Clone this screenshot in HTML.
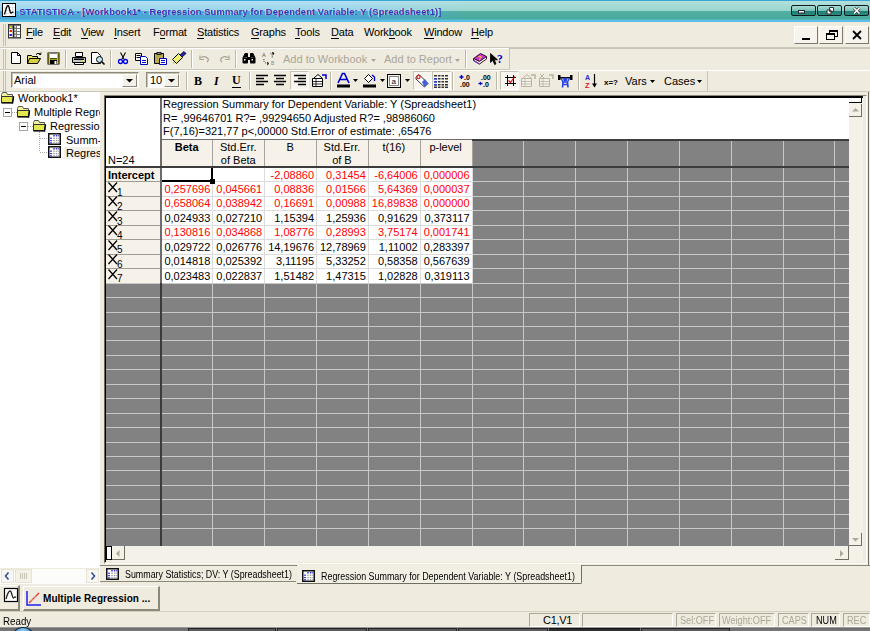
<!DOCTYPE html>
<html><head><meta charset="utf-8">
<style>
*{box-sizing:border-box}
html,body{margin:0;padding:0;width:870px;height:631px;overflow:hidden;background:#EFEBDF;font-family:"Liberation Sans",sans-serif;font-size:11px;color:#000}
.a{position:absolute}
svg{position:absolute;overflow:visible}
.t{position:absolute;white-space:pre;line-height:1}
.menu{position:absolute;top:27px;font-size:11px;white-space:pre;line-height:1;letter-spacing:-0.2px}
.menu u{text-decoration:none;border-bottom:1px solid #000}
.tbtn{position:absolute;top:5px;width:25px;height:11px;border:1.5px solid #0e1a1c;border-radius:2px;background:linear-gradient(180deg,#a8dcd4 0%,#7cc4bc 50%,#1f7e72 52%,#2a8a80 100%)}
.mdib{position:absolute;top:26px;width:24px;height:18px;background:#F6F4EC;border-right:1px solid #7d7a6c;border-bottom:1px solid #7d7a6c;border-top:1px solid #fff;border-left:1px solid #fff}
.vsep{position:absolute;width:2px;height:18px;border-left:1px solid #bdb9aa;border-right:1px solid #fff}
.grip{position:absolute;width:3px;border-left:1px solid #c4c0b0;border-right:1px solid #c4c0b0}

.dis{color:#aaa697}
.press{position:absolute;width:19px;height:19px;border-top:1px solid #c8c4b4;border-left:1px solid #c8c4b4;border-right:1px solid #fff;border-bottom:1px solid #fff;background:#F7F5EE}
.tr{position:absolute;font-size:11px;white-space:pre;line-height:1}
.cell{position:absolute;font-size:11px;white-space:pre;line-height:1;text-align:right}
.red{color:#f00}
.hl{position:absolute;height:1px}
.vl{position:absolute;width:1px}
.sunk{position:absolute;height:14px;border-top:1px solid #aca899;border-left:1px solid #aca899;border-right:1px solid #fff;border-bottom:1px solid #fff}

</style></head><body>
<!-- title bar -->
<div class="a" style="left:0;top:0;width:870px;height:22px;background:linear-gradient(180deg,#3aa6d6 0px,#3aa6d6 1px,#b4e0f2 1px,#98d4ec 11px,#4ea8d8 11.5px,#4aa6d6 19px,#5cc0e6 20px,#5cc0e6 22px)"></div>
<div class="a" style="left:0;top:0;width:870px;height:22px;background:linear-gradient(180deg,#3aa6d6 0px,#3aa6d6 1px,#b2e0dc 1px,#9ad4ce 11px,#52b0a2 11.5px,#48aa9c 19px,#5cc0e6 20px,#5cc0e6 22px);-webkit-mask-image:linear-gradient(90deg,transparent 40%,#000 54%);mask-image:linear-gradient(90deg,transparent 40%,#000 54%)"></div>
<div class="a" style="left:2px;top:3px;width:14px;height:14px;background:#fff;border:1px solid #000"></div>
<svg style="left:3px;top:4px" width="12" height="12"><path d="M0 3.5H12M0 6.5H12M0 9.5H12M3.5 0V12M6.5 0V12M9.5 0V12" stroke="#ddd" stroke-width="0.6"/><path d="M1.5 10.5 C2.5 7 3.5 1.5 5 1.5 C6.5 1.5 6.5 9 8 9 C9 9 9 7.5 10.5 8.5" stroke="#000" stroke-width="1.3" fill="none"/></svg>
<div class="t" style="left:19px;top:6.8px;font-size:9.5px;font-weight:bold;color:#3434b0;letter-spacing:0.03px;text-shadow:-0.8px -0.2px 0 #f4f8ff">STATISTICA - [Workbook1* - Regression Summary for Dependent Variable: Y (Spreadsheet1)]</div>

<div class="tbtn" style="left:791px"><svg style="left:6px;top:4px" width="8" height="4"><rect x="0.5" y="0.5" width="6" height="2.5" fill="#fff" stroke="#223"/></svg></div>
<div class="tbtn" style="left:817px"><svg style="left:8px;top:1px" width="9" height="8"><path d="M3.5 0.5H7.5V4.5H3.5Z M1 3H5V7H1Z" fill="#fff" stroke="#333" stroke-width="1"/></svg></div>
<div class="tbtn" style="left:844px"><svg style="left:8px;top:1px" width="8" height="8"><path d="M1 1L6.5 6.5M6.5 1L1 6.5" stroke="#333" stroke-width="3"/><path d="M1 1L6.5 6.5M6.5 1L1 6.5" stroke="#fff" stroke-width="1.6"/></svg></div><!-- menu bar -->
<div class="a" style="left:0;top:47px;width:870px;height:1px;background:#cdc9ba"></div>
<div class="a" style="left:0;top:48px;width:870px;height:1px;background:#fff"></div>
<div class="grip" style="left:3px;top:24px;height:22px"></div>
<svg style="left:8px;top:24px" width="14" height="15"><rect x="0" y="0" width="13" height="14.5" fill="#333"/><rect x="1" y="1" width="11" height="12.5" fill="#777"/><rect x="1.5" y="2.5" width="2.5" height="1.5" fill="#ee0"/><rect x="1" y="5" width="3.5" height="4" fill="#fff"/><rect x="1.5" y="6" width="2.5" height="2" fill="#e22"/><rect x="1" y="9" width="3.5" height="4" fill="#fff"/><rect x="1.5" y="10" width="2.5" height="2" fill="#22d"/><rect x="5" y="1" width="1" height="12.5" fill="#222"/><rect x="6.5" y="2" width="1.5" height="1.5" fill="#eee"/><rect x="6.5" y="5" width="1.5" height="1.5" fill="#eee"/><rect x="6.5" y="8" width="1.5" height="1.5" fill="#eee"/><rect x="6.5" y="11" width="1.5" height="1.5" fill="#eee"/><rect x="9" y="2" width="3" height="2" fill="#fff"/><rect x="9" y="5" width="3" height="2" fill="#fff"/><rect x="9" y="8" width="3" height="2" fill="#fff"/><rect x="9" y="11" width="3" height="2" fill="#fff"/></svg>
<div class="menu" style="left:26px"><u>F</u>ile</div>
<div class="menu" style="left:53px"><u>E</u>dit</div>
<div class="menu" style="left:81px"><u>V</u>iew</div>
<div class="menu" style="left:114px"><u>I</u>nsert</div>
<div class="menu" style="left:153px">F<u>o</u>rmat</div>
<div class="menu" style="left:197px"><u>S</u>tatistics</div>
<div class="menu" style="left:251px"><u>G</u>raphs</div>
<div class="menu" style="left:295px"><u>T</u>ools</div>
<div class="menu" style="left:331px"><u>D</u>ata</div>
<div class="menu" style="left:364px">Work<u>b</u>ook</div>
<div class="menu" style="left:424px"><u>W</u>indow</div>
<div class="menu" style="left:471px"><u>H</u>elp</div>
<div class="mdib" style="left:794px"><div class="a" style="left:7px;top:11px;width:8px;height:2px;background:#000"></div></div>
<div class="mdib" style="left:819px"><div class="a" style="left:9px;top:3px;width:9px;height:7px;border:1px solid #000;border-top-width:2px"></div><div class="a" style="left:6px;top:6px;width:9px;height:7px;background:#F6F4EC;border:1px solid #000;border-top-width:2px"></div></div>
<div class="mdib" style="left:845px"><svg style="left:6px;top:3px" width="10" height="10"><path d="M1 1L9 9M9 1L1 9" stroke="#000" stroke-width="1.8"/></svg></div>
<!-- toolbar 1 -->
<div class="grip" style="left:3px;top:49px;height:21px"></div>
<!-- new -->
<svg style="left:11px;top:52px" width="11" height="13"><path d="M0.5 0.5H6.5L9.5 3.5V11.5H0.5Z" fill="#fff" stroke="#000"/><path d="M6.5 0.5V3.5H9.5" fill="none" stroke="#000"/></svg>
<!-- open -->
<svg style="left:27px;top:52px" width="15" height="13"><path d="M0.5 3.5H4.5L5.5 4.5H10.5V11.5H0.5Z" fill="#e8e070" stroke="#000"/><path d="M2.5 6.5H13.5L10.5 11.5H0.5Z" fill="#d8d040" stroke="#000"/><path d="M9 2.5Q11 0 13 2.5" fill="none" stroke="#000"/><path d="M12 1L13.5 3L14 0.5" fill="none" stroke="#000"/></svg>
<!-- save -->
<svg style="left:47px;top:52px" width="13" height="13"><rect x="0.5" y="0.5" width="12" height="12" fill="#000"/><rect x="1.5" y="1" width="1.5" height="11" fill="#c8c820"/><rect x="10" y="1" width="1.5" height="11" fill="#c8c820"/><rect x="3" y="1.5" width="7" height="4.5" fill="#fff"/><rect x="3" y="6.5" width="7" height="1.5" fill="#a0a020"/><rect x="7.5" y="9" width="2" height="3" fill="#fff"/></svg>
<div class="vsep" style="left:65px;top:50px"></div>
<!-- print -->
<svg style="left:72px;top:52px" width="15" height="13"><path d="M3.5 0.5H10.5V4.5H3.5Z" fill="#fff" stroke="#000"/><path d="M0.5 5.5H13.5V10.5H0.5Z" fill="#c8c8c8" stroke="#000"/><rect x="2" y="6.5" width="10" height="1.5" fill="#000"/><rect x="9" y="8.2" width="3" height="1.2" fill="#ee0"/><path d="M2.5 10.5H11.5V12.5H2.5Z" fill="#fff" stroke="#000"/></svg>
<!-- preview -->
<svg style="left:91px;top:52px" width="15" height="13"><path d="M0.5 0.5H6.5L9.5 3.5V11.5H0.5Z" fill="#fff" stroke="#000"/><circle cx="8.5" cy="7.5" r="3" fill="#bfe8f0" stroke="#000"/><path d="M10.5 9.5L13.5 12.5" stroke="#000" stroke-width="1.6"/></svg>
<div class="vsep" style="left:110px;top:50px"></div>
<!-- cut -->
<svg style="left:118px;top:52px" width="10" height="13"><path d="M2.5 0.5L6 7M7.5 0.5L4 7" stroke="#000" stroke-width="1.1" fill="none"/><circle cx="2.5" cy="9.5" r="2" fill="none" stroke="#0000e0" stroke-width="1.3"/><circle cx="7.5" cy="9.5" r="2" fill="none" stroke="#0000e0" stroke-width="1.3"/></svg>
<!-- copy -->
<svg style="left:135px;top:53px" width="14" height="12"><path d="M0.5 0.5H6.5V7.5H0.5Z" fill="#fff" stroke="#000"/><path d="M1.5 2.5H5.5M1.5 4.5H5.5" stroke="#000"/><path d="M5.5 3.5H10.5L12.5 5.5V11.5H5.5Z" fill="#fff" stroke="#0000c0"/><path d="M7 7.5H11M7 9.5H11" stroke="#0000c0"/></svg>
<!-- paste -->
<svg style="left:154px;top:52px" width="14" height="13"><path d="M0.5 1.5H9.5V11.5H0.5Z" fill="#b8a850" stroke="#000"/><rect x="3" y="0.5" width="4" height="2" fill="#888" stroke="#000" stroke-width="0.8"/><path d="M5.5 6.5H12.5V12.5H5.5Z" fill="#fff" stroke="#0000c0"/><path d="M7 8.5H11M7 10.5H11" stroke="#0000c0"/></svg>
<!-- painter -->
<svg style="left:172px;top:51px" width="15" height="14"><path d="M0.5 8.5L6.5 2.5L10.5 6.5L4.5 12.5Z" fill="#f0f070" stroke="#000"/><path d="M8 4L12 0.5L14 2.5L10 6" fill="#2020c0" stroke="#000" stroke-width="0.8"/><path d="M1 11L2 13" stroke="#d8d800"/></svg>
<div class="vsep" style="left:191px;top:50px"></div>
<!-- undo/redo disabled -->
<svg style="left:199px;top:55px" width="12" height="8"><path d="M2 2.5Q6 0.5 9 3.5Q10 5.5 8 7" fill="none" stroke="#a8a494" stroke-width="1.2"/><path d="M1 0.5V4.5H5" fill="none" stroke="#a8a494" stroke-width="1.2"/></svg>
<svg style="left:218px;top:55px" width="12" height="8"><path d="M10 2.5Q6 0.5 3 3.5Q2 5.5 4 7" fill="none" stroke="#a8a494" stroke-width="1.2"/><path d="M11 0.5V4.5H7" fill="none" stroke="#a8a494" stroke-width="1.2"/></svg>
<div class="vsep" style="left:235px;top:50px"></div>
<!-- binoculars -->
<svg style="left:242px;top:53px" width="14" height="11"><path d="M1 5L3 0.5H5.5V4M13 5L11 0.5H8.5V4" fill="#000" stroke="#000"/><rect x="0.5" y="4.5" width="5.5" height="6" rx="1" fill="#000"/><rect x="8" y="4.5" width="5.5" height="6" rx="1" fill="#000"/><rect x="5" y="4" width="4" height="3" fill="#000"/><rect x="2" y="6" width="1.5" height="1.5" fill="#fff"/><rect x="9.5" y="6" width="1.5" height="1.5" fill="#fff"/></svg>
<!-- replace -->
<svg style="left:261px;top:52px" width="15" height="13"><text x="1" y="5" font-size="5.5" font-family="Liberation Sans" fill="#555">A</text><text x="10" y="12.5" font-size="5" font-family="Liberation Sans" fill="#888">B</text><path d="M3 7Q2 11 7 11.5M9.5 1Q12 3 11 6" fill="none" stroke="#222" stroke-dasharray="1 1"/><path d="M11 0.5L13 1L12 3" fill="#000" stroke="#000" stroke-width="0.7"/><path d="M6 10L8 11.5L6 13" fill="none" stroke="#000" stroke-width="0.8"/></svg>
<div class="t dis" style="left:283px;top:54px;font-size:11px">Add to Workbook</div>
<svg style="left:371px;top:59px" width="6" height="4"><path d="M0 0H5L2.5 3Z" fill="#aaa697"/></svg>
<div class="t dis" style="left:384px;top:54px;font-size:11px">Add to Report</div>
<svg style="left:455px;top:59px" width="6" height="4"><path d="M0 0H5L2.5 3Z" fill="#aaa697"/></svg>
<div class="vsep" style="left:465px;top:50px"></div>
<!-- book -->
<svg style="left:472px;top:52px" width="16" height="14"><path d="M1.5 6.5L8.5 1.5L14.5 4.5L7.5 9.5Z" fill="#d030d0" stroke="#301030" stroke-width="1"/><path d="M1.5 6.5V8.5L7.5 12L14.5 7V4.5L7.5 9.5Z" fill="#fff" stroke="#301030" stroke-width="1"/><path d="M1.5 8.5L7.5 12" stroke="#8030a0" stroke-width="1.3"/><text x="6" y="7.5" font-size="6" font-weight="bold" font-family="Liberation Sans" fill="#f0e000">?</text></svg>
<!-- help cursor -->
<svg style="left:490px;top:53px" width="16" height="13"><path d="M0.5 0.5V9.5L2.8 7.3L4.6 11.5L6 10.9L4.3 6.8H7.5Z" fill="#000" stroke="#000" stroke-width="0.8"/><text x="7" y="10" font-size="11.5" font-weight="bold" font-family="Liberation Serif" fill="#0000c8">?</text></svg>
<div class="a" style="left:509px;top:49px;width:1px;height:21px;background:#c8c4b4"></div>
<div class="a" style="left:0;top:70px;width:870px;height:1px;background:#fff"></div>
<div class="a" style="left:0;top:69px;width:510px;height:1px;background:#cdc9ba"></div>

<div class="a" style="left:509px;top:48px;width:361px;height:1px;background:#c8c4b4"></div>
<!-- toolbar 2 -->
<div class="grip" style="left:3px;top:71px;height:20px"></div>
<div class="a" style="left:11px;top:72px;width:128px;height:16px;background:#fff;border-top:1px solid #8d897a;border-left:1px solid #8d897a;border-right:1px solid #fff;border-bottom:1px solid #fff"></div>
<div class="a" style="left:12px;top:73px;width:126px;height:14px;border-top:1px solid #c8c4b4;border-left:1px solid #c8c4b4"></div>
<div class="t" style="left:14px;top:75px;font-size:11px">Arial</div>
<div class="a" style="left:122px;top:74px;width:15px;height:13px;background:#F3F1E8;border-right:1px solid #8d897a;border-bottom:1px solid #8d897a;border-top:1px solid #fff;border-left:1px solid #fff"></div>
<svg style="left:126px;top:79px" width="7" height="4"><path d="M0 0H7L3.5 3.5Z" fill="#000"/></svg>
<div class="a" style="left:146px;top:72px;width:34px;height:16px;background:#fff;border-top:1px solid #8d897a;border-left:1px solid #8d897a;border-right:1px solid #fff;border-bottom:1px solid #fff"></div>
<div class="a" style="left:147px;top:73px;width:32px;height:14px;border-top:1px solid #c8c4b4;border-left:1px solid #c8c4b4"></div>
<div class="t" style="left:150px;top:75px;font-size:11px">10</div>
<div class="a" style="left:164px;top:74px;width:15px;height:13px;background:#F3F1E8;border-right:1px solid #8d897a;border-bottom:1px solid #8d897a;border-top:1px solid #fff;border-left:1px solid #fff"></div>
<svg style="left:168px;top:79px" width="7" height="4"><path d="M0 0H7L3.5 3.5Z" fill="#000"/></svg>
<div class="vsep" style="left:186px;top:72px"></div>
<div class="t" style="left:194px;top:75px;font-size:12px;font-family:'Liberation Serif';font-weight:bold">B</div>
<div class="t" style="left:214px;top:75px;font-size:12px;font-family:'Liberation Serif';font-weight:bold;font-style:italic">I</div>
<div class="t" style="left:232px;top:74px;font-size:12px;font-family:'Liberation Serif';font-weight:bold;border-bottom:1px solid #000;padding-bottom:1px">U</div>
<div class="vsep" style="left:249px;top:72px"></div>
<svg style="left:256px;top:75px" width="13" height="10"><path d="M0 0.5H12M0 3.5H8M0 6.5H12M0 9.5H8" stroke="#000" stroke-width="1.3"/></svg>
<svg style="left:274px;top:75px" width="13" height="10"><path d="M0 0.5H12M2 3.5H10M0 6.5H12M2 9.5H10" stroke="#000" stroke-width="1.3"/></svg>
<div class="press" style="left:290px;top:71px"></div>
<svg style="left:294px;top:75px" width="13" height="10"><path d="M0 0.5H12M4 3.5H12M0 6.5H12M4 9.5H12" stroke="#000" stroke-width="1.3"/></svg>
<svg style="left:312px;top:74px" width="15" height="13"><path d="M0.5 4.5H10.5V12.5H0.5Z" fill="#fff" stroke="#000"/><path d="M0.5 7.5H10.5M0.5 10H10.5M4 4.5V12.5" stroke="#000" stroke-width="0.8"/><path d="M2 4L6 0.5L10 4" fill="#fff" stroke="#000"/><path d="M10 1H14V5" fill="none" stroke="#0000d0" stroke-width="1.5"/></svg>
<div class="vsep" style="left:330px;top:72px"></div>
<svg style="left:337px;top:73px" width="14" height="15"><path d="M1 10L5.5 0.5H7.5L12 10M3 6.5H10" fill="none" stroke="#0000d0" stroke-width="1.6"/><rect x="0" y="11.5" width="13" height="3" fill="#000"/></svg>
<svg style="left:353px;top:79px" width="6" height="4"><path d="M0 0H5L2.5 3Z" fill="#000"/></svg>
<svg style="left:363px;top:73px" width="14" height="15"><path d="M1.5 5.5L5.5 1.5L9.5 5.5L5.5 9.5Z" fill="#fff" stroke="#000"/><path d="M9 2L11.5 4V8" stroke="#0000d0" stroke-width="1.4" fill="none"/><rect x="0" y="11.5" width="13" height="3" fill="#000"/></svg>
<svg style="left:380px;top:79px" width="6" height="4"><path d="M0 0H5L2.5 3Z" fill="#000"/></svg>
<svg style="left:387px;top:74px" width="14" height="14"><rect x="0.5" y="0.5" width="13" height="13" fill="#F3F1E8" stroke="#000"/><rect x="2.5" y="2.5" width="9" height="9" fill="#fff" stroke="#888"/><text x="4.5" y="10" font-size="8" font-family="Liberation Sans" fill="#000">a</text></svg>
<svg style="left:405px;top:79px" width="6" height="4"><path d="M0 0H5L2.5 3Z" fill="#000"/></svg>
<div class="press" style="left:413px;top:71px"></div>
<svg style="left:415px;top:74px" width="15" height="14"><path d="M1 3L4 0.5L13 9.5L9.5 13L1 5Z" fill="#fff" stroke="#333"/><path d="M7 8L10 5L13 9.5L9.5 13Z" fill="#4060e0"/><circle cx="3.5" cy="3" r="1.6" fill="none" stroke="#e02020" stroke-width="1.2"/></svg>
<div class="press" style="left:432px;top:71px"></div>
<svg style="left:434px;top:75px" width="14" height="13"><g fill="#333"><rect x="0" y="0" width="14" height="1.5"/><rect x="0" y="3" width="14" height="1.5"/><rect x="0" y="6" width="14" height="1.5"/><rect x="0" y="9" width="14" height="1.5"/><rect x="0" y="11.5" width="14" height="1.5"/></g><g fill="#F3F1E8"><rect x="3" y="0" width="1" height="13"/><rect x="6.5" y="0" width="1" height="13"/><rect x="10" y="0" width="1" height="13"/></g><g fill="#2040e0"><rect x="0" y="3" width="3" height="1.5"/><rect x="0" y="6" width="3" height="1.5"/><rect x="0" y="9" width="3" height="1.5"/></g></svg>
<div class="vsep" style="left:452px;top:72px"></div>
<svg style="left:459px;top:74px" width="13" height="13"><path d="M2.5 1V5M0.5 3H4.5" stroke="#0000d0" stroke-width="1.4"/><text x="5" y="6" font-size="7" font-weight="bold" font-family="Liberation Sans" fill="#000">.0</text><text x="1" y="12.5" font-size="7" font-weight="bold" font-family="Liberation Sans" fill="#000">.00</text></svg>
<svg style="left:478px;top:74px" width="13" height="13"><text x="3" y="6" font-size="7" font-weight="bold" font-family="Liberation Sans" fill="#000">.00</text><path d="M0.5 9.5H4.5" stroke="#0000d0" stroke-width="1.4"/><path d="M1 9.5L3 7.5V11.5Z" fill="#0000d0"/><text x="5" y="12.5" font-size="7" font-weight="bold" font-family="Liberation Sans" fill="#000">.0</text></svg>
<div class="vsep" style="left:496px;top:72px"></div>
<div class="press" style="left:500px;top:71px"></div>
<svg style="left:505px;top:75px" width="12" height="11"><path d="M2.5 0V11M8.5 0V11M0 2.5H11M0 8.5H11" stroke="#000" stroke-width="1"/><path d="M3.5 5.5L5.5 7.5L10 1.5" stroke="#e00000" stroke-width="1.1" fill="none"/></svg>
<svg style="left:521px;top:74px" width="15" height="13"><path d="M0.5 4.5H10.5V12.5H0.5Z" fill="#F3F1E8" stroke="#b8b4a4"/><path d="M0.5 7.5H10.5M0.5 10H10.5M4 4.5V12.5" stroke="#b8b4a4" stroke-width="0.8"/><path d="M2 4L6 0.5L10 4" fill="none" stroke="#b8b4a4"/><path d="M10 1H14V5" fill="none" stroke="#b8b4a4" stroke-width="1.5"/></svg>
<svg style="left:539px;top:74px" width="15" height="13"><path d="M0.5 4.5H10.5V12.5H0.5Z" fill="#F3F1E8" stroke="#b8b4a4"/><path d="M0.5 7.5H10.5M0.5 10H10.5M4 4.5V12.5" stroke="#b8b4a4" stroke-width="0.8"/><path d="M1 0L5 4M5 0L1 4" stroke="#b8b4a4"/><path d="M10 1H14V5" fill="none" stroke="#b8b4a4" stroke-width="1.5"/></svg>
<svg style="left:558px;top:74px" width="15" height="14"><rect x="0" y="1" width="2.5" height="5" fill="#000"/><rect x="12" y="1" width="2.5" height="5" fill="#000"/><rect x="1" y="3" width="12.5" height="1.5" fill="#000"/><circle cx="7.2" cy="5.5" r="2" fill="#2040f0"/><path d="M3 4L5 8H9.5L11.5 4" fill="none" stroke="#2040f0" stroke-width="1.3"/><path d="M5 8L4.5 13.5M9.5 8L10 13.5M4.5 10.5H10" stroke="#2040f0" stroke-width="1.6"/></svg>
<div class="vsep" style="left:578px;top:72px"></div>
<svg style="left:585px;top:74px" width="13" height="14"><text x="0" y="6" font-size="7" font-weight="bold" font-family="Liberation Sans" fill="#2030e0">A</text><text x="0" y="13.5" font-size="7.5" font-weight="bold" font-family="Liberation Sans" fill="#e02020">Z</text><path d="M9.5 0V12.5" stroke="#000" stroke-width="1.2"/><path d="M7 9.5L9.5 13.5L12 9.5" fill="#000"/></svg>
<div class="t" style="left:604px;top:79px;font-size:8px;font-weight:bold">x=?</div>
<div class="t" style="left:625px;top:76px;font-size:11px">Vars</div>
<svg style="left:650px;top:80px" width="6" height="4"><path d="M0 0H5L2.5 3Z" fill="#000"/></svg>
<div class="t" style="left:664px;top:76px;font-size:11px">Cases</div>
<svg style="left:697px;top:80px" width="6" height="4"><path d="M0 0H5L2.5 3Z" fill="#000"/></svg>
<div class="a" style="left:707px;top:71px;width:1px;height:20px;background:#c8c4b4"></div>
<div class="a" style="left:0;top:91px;width:870px;height:1px;background:#cdc9ba"></div>
<!-- tree -->
<div class="a" style="left:0;top:92px;width:100px;height:476px;background:#fff"></div>
<div class="a" style="left:100px;top:92px;width:769px;height:474px;border-right:1px solid #716f64;border-bottom:1px solid #716f64"></div>
<div class="a" style="left:104px;top:95px;width:763px;height:469px;border-top:1px solid #8d897a;border-left:1px solid #8d897a;border-right:1px solid #fff;border-bottom:1px solid #fff"></div>
<div class="a" style="left:104px;top:96px;width:759px;height:466px;border-top:2px solid #000;border-left:2px solid #000;background:#F3F1E8"></div>
<div class="a" style="left:104px;top:96px;width:1px;height:466px;background:#6a675c"></div>
<div class="a" style="left:106px;top:98px;width:743px;height:448px;background:#828282"></div>
<div class="a" style="left:106px;top:98px;width:743px;height:42px;background:#fff"></div>
<div class="a" style="left:106px;top:98px;width:55px;height:69px;background:#fff"></div>
<div class="a" style="left:162px;top:140px;width:310px;height:27px;background:#F6F1E9"></div>
<div class="a" style="left:162px;top:168px;width:310px;height:115px;background:#fff"></div>
<div class="a" style="left:106px;top:168px;width:55px;height:115px;background:#F6F1E9"></div>
<div class="hl" style="left:106px;top:282.60px;width:743px;background:#c8c8c8"></div>
<div class="hl" style="left:106px;top:297.05px;width:743px;background:#c8c8c8"></div>
<div class="hl" style="left:106px;top:311.50px;width:743px;background:#c8c8c8"></div>
<div class="hl" style="left:106px;top:325.95px;width:743px;background:#c8c8c8"></div>
<div class="hl" style="left:106px;top:340.40px;width:743px;background:#c8c8c8"></div>
<div class="hl" style="left:106px;top:354.85px;width:743px;background:#c8c8c8"></div>
<div class="hl" style="left:106px;top:369.30px;width:743px;background:#c8c8c8"></div>
<div class="hl" style="left:106px;top:383.75px;width:743px;background:#c8c8c8"></div>
<div class="hl" style="left:106px;top:398.20px;width:743px;background:#c8c8c8"></div>
<div class="hl" style="left:106px;top:412.65px;width:743px;background:#c8c8c8"></div>
<div class="hl" style="left:106px;top:427.10px;width:743px;background:#c8c8c8"></div>
<div class="hl" style="left:106px;top:441.55px;width:743px;background:#c8c8c8"></div>
<div class="hl" style="left:106px;top:456.00px;width:743px;background:#c8c8c8"></div>
<div class="hl" style="left:106px;top:470.45px;width:743px;background:#c8c8c8"></div>
<div class="hl" style="left:106px;top:484.90px;width:743px;background:#c8c8c8"></div>
<div class="hl" style="left:106px;top:499.35px;width:743px;background:#c8c8c8"></div>
<div class="hl" style="left:106px;top:513.80px;width:743px;background:#c8c8c8"></div>
<div class="hl" style="left:106px;top:528.25px;width:743px;background:#c8c8c8"></div>
<div class="hl" style="left:472px;top:181.45px;width:377px;background:#c8c8c8"></div>
<div class="hl" style="left:162px;top:181.45px;width:310px;background:#dcdcdc"></div>
<div class="hl" style="left:106px;top:181.45px;width:55px;background:#a09c94"></div>
<div class="hl" style="left:472px;top:195.90px;width:377px;background:#c8c8c8"></div>
<div class="hl" style="left:162px;top:195.90px;width:310px;background:#dcdcdc"></div>
<div class="hl" style="left:106px;top:195.90px;width:55px;background:#a09c94"></div>
<div class="hl" style="left:472px;top:210.35px;width:377px;background:#c8c8c8"></div>
<div class="hl" style="left:162px;top:210.35px;width:310px;background:#dcdcdc"></div>
<div class="hl" style="left:106px;top:210.35px;width:55px;background:#a09c94"></div>
<div class="hl" style="left:472px;top:224.80px;width:377px;background:#c8c8c8"></div>
<div class="hl" style="left:162px;top:224.80px;width:310px;background:#dcdcdc"></div>
<div class="hl" style="left:106px;top:224.80px;width:55px;background:#a09c94"></div>
<div class="hl" style="left:472px;top:239.25px;width:377px;background:#c8c8c8"></div>
<div class="hl" style="left:162px;top:239.25px;width:310px;background:#dcdcdc"></div>
<div class="hl" style="left:106px;top:239.25px;width:55px;background:#a09c94"></div>
<div class="hl" style="left:472px;top:253.70px;width:377px;background:#c8c8c8"></div>
<div class="hl" style="left:162px;top:253.70px;width:310px;background:#dcdcdc"></div>
<div class="hl" style="left:106px;top:253.70px;width:55px;background:#a09c94"></div>
<div class="hl" style="left:472px;top:268.15px;width:377px;background:#c8c8c8"></div>
<div class="hl" style="left:162px;top:268.15px;width:310px;background:#dcdcdc"></div>
<div class="hl" style="left:106px;top:268.15px;width:55px;background:#a09c94"></div>
<div class="vl" style="left:212.34px;top:140px;height:27px;background:#a8a49c"></div>
<div class="vl" style="left:212.34px;top:168px;height:114.60px;background:#dcdcdc"></div>
<div class="vl" style="left:212.34px;top:282.60px;height:263.40px;background:#c8c8c8"></div>
<div class="vl" style="left:264.18px;top:140px;height:27px;background:#a8a49c"></div>
<div class="vl" style="left:264.18px;top:168px;height:114.60px;background:#dcdcdc"></div>
<div class="vl" style="left:264.18px;top:282.60px;height:263.40px;background:#c8c8c8"></div>
<div class="vl" style="left:316.02px;top:140px;height:27px;background:#a8a49c"></div>
<div class="vl" style="left:316.02px;top:168px;height:114.60px;background:#dcdcdc"></div>
<div class="vl" style="left:316.02px;top:282.60px;height:263.40px;background:#c8c8c8"></div>
<div class="vl" style="left:367.86px;top:140px;height:27px;background:#a8a49c"></div>
<div class="vl" style="left:367.86px;top:168px;height:114.60px;background:#dcdcdc"></div>
<div class="vl" style="left:367.86px;top:282.60px;height:263.40px;background:#c8c8c8"></div>
<div class="vl" style="left:419.70px;top:140px;height:27px;background:#a8a49c"></div>
<div class="vl" style="left:419.70px;top:168px;height:114.60px;background:#dcdcdc"></div>
<div class="vl" style="left:419.70px;top:282.60px;height:263.40px;background:#c8c8c8"></div>
<div class="vl" style="left:471.54px;top:140px;height:27px;background:#a8a49c"></div>
<div class="vl" style="left:471.54px;top:168px;height:114.60px;background:#dcdcdc"></div>
<div class="vl" style="left:471.54px;top:282.60px;height:263.40px;background:#c8c8c8"></div>
<div class="vl" style="left:523.38px;top:140px;height:406px;background:#c8c8c8"></div>
<div class="vl" style="left:575.22px;top:140px;height:406px;background:#c8c8c8"></div>
<div class="vl" style="left:627.06px;top:140px;height:406px;background:#c8c8c8"></div>
<div class="vl" style="left:678.90px;top:140px;height:406px;background:#c8c8c8"></div>
<div class="vl" style="left:730.74px;top:140px;height:406px;background:#c8c8c8"></div>
<div class="vl" style="left:782.58px;top:140px;height:406px;background:#c8c8c8"></div>
<div class="vl" style="left:834.42px;top:140px;height:406px;background:#c8c8c8"></div>
<div class="a" style="left:160px;top:98px;width:2px;height:448px;background:#6e6c6a"></div>
<div class="a" style="left:160px;top:282.60px;width:2px;height:263.40px;background:#3a3a3a"></div>
<div class="a" style="left:106px;top:166px;width:743px;height:2px;background:#3c3c3c"></div>
<div class="a" style="left:162px;top:139px;width:687px;height:1px;background:#6e6c6a"></div>
<div class="a" style="left:472px;top:139px;width:377px;height:2px;background:#3c3c3c"></div>
<div class="t" style="left:163px;top:99px;font-size:11px">Regression Summary for Dependent Variable: Y (Spreadsheet1)</div>
<div class="t" style="left:163px;top:113px;font-size:11px">R= ,99646701 R?= ,99294650 Adjusted R?= ,98986060</div>
<div class="t" style="left:163px;top:126px;font-size:11px">F(7,16)=321,77 p&lt;,00000 Std.Error of estimate: ,65476</div>
<div class="t" style="left:108px;top:155px;font-size:11px">N=24</div>
<div class="t" style="left:161.00px;top:142px;width:51.34px;text-align:center;font-size:11px;font-weight:bold;">Beta</div>
<div class="t" style="left:212.34px;top:142px;width:51.84px;text-align:center;font-size:11px;">Std.Err.</div>
<div class="t" style="left:212.34px;top:155px;width:51.84px;text-align:center;font-size:11px">of Beta</div>
<div class="t" style="left:264.18px;top:142px;width:51.84px;text-align:center;font-size:11px;">B</div>
<div class="t" style="left:316.02px;top:142px;width:51.84px;text-align:center;font-size:11px;">Std.Err.</div>
<div class="t" style="left:316.02px;top:155px;width:51.84px;text-align:center;font-size:11px">of B</div>
<div class="t" style="left:367.86px;top:142px;width:51.84px;text-align:center;font-size:11px;">t(16)</div>
<div class="t" style="left:419.70px;top:142px;width:51.84px;text-align:center;font-size:11px;">p-level</div>
<div class="t" style="left:108px;top:169.50px;font-size:11px;font-weight:bold">Intercept</div>
<div class="t red" style="left:256.02px;top:169.50px;width:58px;text-align:right;font-size:11px">-2,08860</div>
<div class="t red" style="left:307.86px;top:169.50px;width:58px;text-align:right;font-size:11px">0,31454</div>
<div class="t red" style="left:359.70px;top:169.50px;width:58px;text-align:right;font-size:11px">-6,64006</div>
<div class="t red" style="left:411.54px;top:169.50px;width:58px;text-align:right;font-size:11px">0,000006</div>
<svg style="left:108px;top:181.95px" width="10" height="11"><path d="M0.5 0.5L9 10M9 0.5L0.5 10" stroke="#000" stroke-width="1.25" fill="none"/></svg>
<div class="t" style="left:117px;top:187.65px;font-size:10px">1</div>
<div class="t red" style="left:152.34px;top:183.95px;width:58px;text-align:right;font-size:11px">0,257696</div>
<div class="t red" style="left:204.18px;top:183.95px;width:58px;text-align:right;font-size:11px">0,045661</div>
<div class="t red" style="left:256.02px;top:183.95px;width:58px;text-align:right;font-size:11px">0,08836</div>
<div class="t red" style="left:307.86px;top:183.95px;width:58px;text-align:right;font-size:11px">0,01566</div>
<div class="t red" style="left:359.70px;top:183.95px;width:58px;text-align:right;font-size:11px">5,64369</div>
<div class="t red" style="left:411.54px;top:183.95px;width:58px;text-align:right;font-size:11px">0,000037</div>
<svg style="left:108px;top:196.40px" width="10" height="11"><path d="M0.5 0.5L9 10M9 0.5L0.5 10" stroke="#000" stroke-width="1.25" fill="none"/></svg>
<div class="t" style="left:117px;top:202.10px;font-size:10px">2</div>
<div class="t red" style="left:152.34px;top:198.40px;width:58px;text-align:right;font-size:11px">0,658064</div>
<div class="t red" style="left:204.18px;top:198.40px;width:58px;text-align:right;font-size:11px">0,038942</div>
<div class="t red" style="left:256.02px;top:198.40px;width:58px;text-align:right;font-size:11px">0,16691</div>
<div class="t red" style="left:307.86px;top:198.40px;width:58px;text-align:right;font-size:11px">0,00988</div>
<div class="t red" style="left:359.70px;top:198.40px;width:58px;text-align:right;font-size:11px">16,89838</div>
<div class="t red" style="left:411.54px;top:198.40px;width:58px;text-align:right;font-size:11px">0,000000</div>
<svg style="left:108px;top:210.85px" width="10" height="11"><path d="M0.5 0.5L9 10M9 0.5L0.5 10" stroke="#000" stroke-width="1.25" fill="none"/></svg>
<div class="t" style="left:117px;top:216.55px;font-size:10px">3</div>
<div class="t" style="left:152.34px;top:212.85px;width:58px;text-align:right;font-size:11px">0,024933</div>
<div class="t" style="left:204.18px;top:212.85px;width:58px;text-align:right;font-size:11px">0,027210</div>
<div class="t" style="left:256.02px;top:212.85px;width:58px;text-align:right;font-size:11px">1,15394</div>
<div class="t" style="left:307.86px;top:212.85px;width:58px;text-align:right;font-size:11px">1,25936</div>
<div class="t" style="left:359.70px;top:212.85px;width:58px;text-align:right;font-size:11px">0,91629</div>
<div class="t" style="left:411.54px;top:212.85px;width:58px;text-align:right;font-size:11px">0,373117</div>
<svg style="left:108px;top:225.30px" width="10" height="11"><path d="M0.5 0.5L9 10M9 0.5L0.5 10" stroke="#000" stroke-width="1.25" fill="none"/></svg>
<div class="t" style="left:117px;top:231.00px;font-size:10px">4</div>
<div class="t red" style="left:152.34px;top:227.30px;width:58px;text-align:right;font-size:11px">0,130816</div>
<div class="t red" style="left:204.18px;top:227.30px;width:58px;text-align:right;font-size:11px">0,034868</div>
<div class="t red" style="left:256.02px;top:227.30px;width:58px;text-align:right;font-size:11px">1,08776</div>
<div class="t red" style="left:307.86px;top:227.30px;width:58px;text-align:right;font-size:11px">0,28993</div>
<div class="t red" style="left:359.70px;top:227.30px;width:58px;text-align:right;font-size:11px">3,75174</div>
<div class="t red" style="left:411.54px;top:227.30px;width:58px;text-align:right;font-size:11px">0,001741</div>
<svg style="left:108px;top:239.75px" width="10" height="11"><path d="M0.5 0.5L9 10M9 0.5L0.5 10" stroke="#000" stroke-width="1.25" fill="none"/></svg>
<div class="t" style="left:117px;top:245.45px;font-size:10px">5</div>
<div class="t" style="left:152.34px;top:241.75px;width:58px;text-align:right;font-size:11px">0,029722</div>
<div class="t" style="left:204.18px;top:241.75px;width:58px;text-align:right;font-size:11px">0,026776</div>
<div class="t" style="left:256.02px;top:241.75px;width:58px;text-align:right;font-size:11px">14,19676</div>
<div class="t" style="left:307.86px;top:241.75px;width:58px;text-align:right;font-size:11px">12,78969</div>
<div class="t" style="left:359.70px;top:241.75px;width:58px;text-align:right;font-size:11px">1,11002</div>
<div class="t" style="left:411.54px;top:241.75px;width:58px;text-align:right;font-size:11px">0,283397</div>
<svg style="left:108px;top:254.20px" width="10" height="11"><path d="M0.5 0.5L9 10M9 0.5L0.5 10" stroke="#000" stroke-width="1.25" fill="none"/></svg>
<div class="t" style="left:117px;top:259.90px;font-size:10px">6</div>
<div class="t" style="left:152.34px;top:256.20px;width:58px;text-align:right;font-size:11px">0,014818</div>
<div class="t" style="left:204.18px;top:256.20px;width:58px;text-align:right;font-size:11px">0,025392</div>
<div class="t" style="left:256.02px;top:256.20px;width:58px;text-align:right;font-size:11px">3,11195</div>
<div class="t" style="left:307.86px;top:256.20px;width:58px;text-align:right;font-size:11px">5,33252</div>
<div class="t" style="left:359.70px;top:256.20px;width:58px;text-align:right;font-size:11px">0,58358</div>
<div class="t" style="left:411.54px;top:256.20px;width:58px;text-align:right;font-size:11px">0,567639</div>
<svg style="left:108px;top:268.65px" width="10" height="11"><path d="M0.5 0.5L9 10M9 0.5L0.5 10" stroke="#000" stroke-width="1.25" fill="none"/></svg>
<div class="t" style="left:117px;top:274.35px;font-size:10px">7</div>
<div class="t" style="left:152.34px;top:270.65px;width:58px;text-align:right;font-size:11px">0,023483</div>
<div class="t" style="left:204.18px;top:270.65px;width:58px;text-align:right;font-size:11px">0,022837</div>
<div class="t" style="left:256.02px;top:270.65px;width:58px;text-align:right;font-size:11px">1,51482</div>
<div class="t" style="left:307.86px;top:270.65px;width:58px;text-align:right;font-size:11px">1,47315</div>
<div class="t" style="left:359.70px;top:270.65px;width:58px;text-align:right;font-size:11px">1,02828</div>
<div class="t" style="left:411.54px;top:270.65px;width:58px;text-align:right;font-size:11px">0,319113</div>
<div class="a" style="left:162px;top:180px;width:51px;height:2px;background:#000"></div>
<div class="a" style="left:211px;top:168px;width:2px;height:13px;background:#000"></div>
<div class="a" style="left:210px;top:179px;width:5px;height:5px;background:#000"></div>
<div class="a" style="left:849px;top:98px;width:13px;height:448px;background:#F3F1E8"></div>
<div class="a" style="left:849px;top:98px;width:13px;height:5px;background:#fff;border-bottom:1px solid #000;border-right:1px solid #000"></div>
<div class="a" style="left:849px;top:104px;width:13px;height:13px;background:#F3F1E8;border-right:1px solid #716f64;border-bottom:1px solid #716f64"></div>
<svg style="left:852px;top:108px" width="7" height="4"><path d="M0 3.5H7L3.5 0Z" fill="#aca899"/></svg>
<div class="a" style="left:849px;top:533px;width:13px;height:13px;background:#F3F1E8;border-right:1px solid #716f64;border-bottom:1px solid #716f64"></div>
<svg style="left:852px;top:538px" width="7" height="4"><path d="M0 0H7L3.5 3.5Z" fill="#aca899"/></svg>
<div class="a" style="left:106px;top:546px;width:743px;height:14px;background:#F3F1E8"></div>
<div class="a" style="left:105px;top:546px;width:7px;height:14px;background:#fff;border:1px solid #000;border-left-width:2px"></div>
<div class="a" style="left:112px;top:546px;width:13px;height:14px;background:#F3F1E8;border-right:1px solid #716f64;border-bottom:1px solid #716f64"></div>
<svg style="left:116px;top:550px" width="4" height="7"><path d="M3.5 0V7L0 3.5Z" fill="#aca899"/></svg>
<div class="a" style="left:835px;top:546px;width:14px;height:14px;background:#F3F1E8;border-right:1px solid #716f64;border-bottom:1px solid #716f64"></div>
<svg style="left:840px;top:550px" width="4" height="7"><path d="M0 0V7L3.5 3.5Z" fill="#aca899"/></svg><!-- tree items -->
<div class="a" style="left:0;top:0;width:100px;height:200px;overflow:hidden">
<svg style="left:1px;top:92px" width="14" height="12"><path d="M0.5 2.5L1.5 0.5H5.5L6.5 2.5H11.5V10.5H0.5Z" fill="#f4f4a0" stroke="#555"/><path d="M0.5 4.5H12.5L11.5 10.5H0.5Z" fill="#e4e850" stroke="#333"/><path d="M12.5 4.5L11.5 11.5" stroke="#000" stroke-width="1.5"/><path d="M0.5 11H12" stroke="#000" stroke-width="1.2"/></svg>
<div class="tr" style="left:18px;top:93px">Workbook1*</div>
<div class="a" style="left:3px;top:108px;width:9px;height:9px;border:1px solid #aca899;background:#fff"></div>
<div class="a" style="left:5px;top:112px;width:5px;height:1px;background:#000"></div>
<div class="a" style="left:12px;top:112px;width:5px;height:1px;background:repeating-linear-gradient(90deg,#aca899 0,#aca899 1px,transparent 1px,transparent 2px)"></div>
<svg style="left:17px;top:106px" width="14" height="12"><path d="M0.5 2.5L1.5 0.5H5.5L6.5 2.5H11.5V10.5H0.5Z" fill="#f4f4a0" stroke="#555"/><path d="M0.5 4.5H12.5L11.5 10.5H0.5Z" fill="#e4e850" stroke="#333"/><path d="M12.5 4.5L11.5 11.5" stroke="#000" stroke-width="1.5"/><path d="M0.5 11H12" stroke="#000" stroke-width="1.2"/></svg>
<div class="tr" style="left:34px;top:107px">Multiple Regre</div>
<div class="a" style="left:19px;top:122px;width:9px;height:9px;border:1px solid #aca899;background:#fff"></div>
<div class="a" style="left:21px;top:126px;width:5px;height:1px;background:#000"></div>
<div class="a" style="left:28px;top:126px;width:5px;height:1px;background:repeating-linear-gradient(90deg,#aca899 0,#aca899 1px,transparent 1px,transparent 2px)"></div>
<svg style="left:33px;top:120px" width="14" height="12"><path d="M0.5 2.5L1.5 0.5H5.5L6.5 2.5H11.5V10.5H0.5Z" fill="#f4f4a0" stroke="#555"/><path d="M0.5 4.5H12.5L11.5 10.5H0.5Z" fill="#e4e850" stroke="#333"/><path d="M12.5 4.5L11.5 11.5" stroke="#000" stroke-width="1.5"/><path d="M0.5 11H12" stroke="#000" stroke-width="1.2"/></svg>
<div class="tr" style="left:50px;top:121px">Regressio</div>
<div class="a" style="left:39px;top:132px;width:1px;height:20px;background:repeating-linear-gradient(180deg,#aca899 0,#aca899 1px,transparent 1px,transparent 2px)"></div>
<div class="a" style="left:40px;top:138px;width:8px;height:1px;background:repeating-linear-gradient(90deg,#aca899 0,#aca899 1px,transparent 1px,transparent 2px)"></div>
<div class="a" style="left:40px;top:152px;width:8px;height:1px;background:repeating-linear-gradient(90deg,#aca899 0,#aca899 1px,transparent 1px,transparent 2px)"></div>
<svg style="left:48px;top:133px" width="14" height="12"><rect x="0.75" y="0.75" width="11.5" height="10.5" fill="#fff" stroke="#111" stroke-width="1.5"/><rect x="5.2" y="2.2" width="1.6" height="1.2" fill="#1010d0"/><rect x="7.8" y="2.2" width="1.6" height="1.2" fill="#1010d0"/><rect x="10.2" y="2.2" width="0.9" height="1.2" fill="#1010d0"/><rect x="2.2" y="4.6" width="1.6" height="1.2" fill="#1010d0"/><rect x="5.2" y="4.6" width="1.6" height="1.2" fill="#9a9a9a"/><rect x="7.8" y="4.6" width="1.6" height="1.2" fill="#9a9a9a"/><rect x="10.2" y="4.6" width="0.9" height="1.2" fill="#9a9a9a"/><rect x="2.2" y="7.0" width="1.6" height="1.2" fill="#1010d0"/><rect x="5.2" y="7.0" width="1.6" height="1.2" fill="#9a9a9a"/><rect x="7.8" y="7.0" width="1.6" height="1.2" fill="#9a9a9a"/><rect x="10.2" y="7.0" width="0.9" height="1.2" fill="#9a9a9a"/><rect x="2.2" y="9.2" width="1.6" height="1.2" fill="#1010d0"/><rect x="5.2" y="9.2" width="1.6" height="1.2" fill="#9a9a9a"/><rect x="7.8" y="9.2" width="1.6" height="1.2" fill="#9a9a9a"/><rect x="10.2" y="9.2" width="0.9" height="1.2" fill="#9a9a9a"/></svg>
<div class="tr" style="left:66px;top:135px">Summ-</div>
<div class="a" style="left:64px;top:147px;width:36px;height:12px;background:#F3F1E8"></div>
<svg style="left:48px;top:146px" width="14" height="12"><rect x="0.75" y="0.75" width="11.5" height="10.5" fill="#fff" stroke="#111" stroke-width="1.5"/><rect x="5.2" y="2.2" width="1.6" height="1.2" fill="#1010d0"/><rect x="7.8" y="2.2" width="1.6" height="1.2" fill="#1010d0"/><rect x="10.2" y="2.2" width="0.9" height="1.2" fill="#1010d0"/><rect x="2.2" y="4.6" width="1.6" height="1.2" fill="#1010d0"/><rect x="5.2" y="4.6" width="1.6" height="1.2" fill="#9a9a9a"/><rect x="7.8" y="4.6" width="1.6" height="1.2" fill="#9a9a9a"/><rect x="10.2" y="4.6" width="0.9" height="1.2" fill="#9a9a9a"/><rect x="2.2" y="7.0" width="1.6" height="1.2" fill="#1010d0"/><rect x="5.2" y="7.0" width="1.6" height="1.2" fill="#9a9a9a"/><rect x="7.8" y="7.0" width="1.6" height="1.2" fill="#9a9a9a"/><rect x="10.2" y="7.0" width="0.9" height="1.2" fill="#9a9a9a"/><rect x="2.2" y="9.2" width="1.6" height="1.2" fill="#1010d0"/><rect x="5.2" y="9.2" width="1.6" height="1.2" fill="#9a9a9a"/><rect x="7.8" y="9.2" width="1.6" height="1.2" fill="#9a9a9a"/><rect x="10.2" y="9.2" width="0.9" height="1.2" fill="#9a9a9a"/></svg>
<div class="tr" style="left:66px;top:148px">Regres</div>
</div>
<!-- tree hscroll -->
<div class="a" style="left:0;top:569px;width:100px;height:15px;background:#FCFCFA"></div>
<div class="a" style="left:1px;top:569px;width:13px;height:14px;border:1px solid #e6e3d6;background:#F7F6F0"></div>
<svg style="left:4px;top:572px" width="6" height="8"><path d="M4.5 0.5L1.5 4L4.5 7.5" fill="none" stroke="#3050a0" stroke-width="1.6"/></svg>
<div class="a" style="left:15px;top:569px;width:17px;height:14px;border:1px solid #e6e3d6;background:#F3F1E8"></div>
<div class="a" style="left:20px;top:573px;width:7px;height:6px;background:repeating-linear-gradient(90deg,#c8c4b4 0,#c8c4b4 1px,transparent 1px,transparent 2px)"></div>
<div class="a" style="left:86px;top:569px;width:13px;height:14px;border:1px solid #e6e3d6;background:#F7F6F0"></div>
<svg style="left:90px;top:572px" width="6" height="8"><path d="M1.5 0.5L4.5 4L1.5 7.5" fill="none" stroke="#3050a0" stroke-width="1.6"/></svg>
<!-- tabs -->
<div class="a" style="left:100px;top:565px;width:196px;height:1px;background:#8d897a"></div><div class="a" style="left:581px;top:565px;width:289px;height:1px;background:#8d897a"></div>
<div class="a" style="left:100px;top:566px;width:196px;height:16px;background:#EFEBDF;border-bottom:1px solid #8d897a"></div>
<svg style="left:106px;top:568px" width="14" height="13"><rect x="0.75" y="0.75" width="11.5" height="10.5" fill="#fff" stroke="#111" stroke-width="1.5"/><rect x="5.2" y="2.2" width="1.6" height="1.2" fill="#1010d0"/><rect x="7.8" y="2.2" width="1.6" height="1.2" fill="#1010d0"/><rect x="10.2" y="2.2" width="0.9" height="1.2" fill="#1010d0"/><rect x="2.2" y="4.6" width="1.6" height="1.2" fill="#1010d0"/><rect x="5.2" y="4.6" width="1.6" height="1.2" fill="#9a9a9a"/><rect x="7.8" y="4.6" width="1.6" height="1.2" fill="#9a9a9a"/><rect x="10.2" y="4.6" width="0.9" height="1.2" fill="#9a9a9a"/><rect x="2.2" y="7.0" width="1.6" height="1.2" fill="#1010d0"/><rect x="5.2" y="7.0" width="1.6" height="1.2" fill="#9a9a9a"/><rect x="7.8" y="7.0" width="1.6" height="1.2" fill="#9a9a9a"/><rect x="10.2" y="7.0" width="0.9" height="1.2" fill="#9a9a9a"/><rect x="2.2" y="9.2" width="1.6" height="1.2" fill="#1010d0"/><rect x="5.2" y="9.2" width="1.6" height="1.2" fill="#9a9a9a"/><rect x="7.8" y="9.2" width="1.6" height="1.2" fill="#9a9a9a"/><rect x="10.2" y="9.2" width="0.9" height="1.2" fill="#9a9a9a"/></svg>
<div class="t" style="left:125px;top:570px;font-size:10px;transform-origin:0 0;transform:scaleX(0.887)">Summary Statistics; DV: Y (Spreadsheet1)</div>
<div class="a" style="left:297px;top:565px;width:285px;height:19px;background:#F1EEE4;border-right:1px solid #716f64;border-bottom:1px solid #716f64;border-bottom-right-radius:2px"></div>
<svg style="left:302px;top:570px" width="14" height="13"><rect x="0.75" y="0.75" width="11.5" height="10.5" fill="#fff" stroke="#111" stroke-width="1.5"/><rect x="5.2" y="2.2" width="1.6" height="1.2" fill="#1010d0"/><rect x="7.8" y="2.2" width="1.6" height="1.2" fill="#1010d0"/><rect x="10.2" y="2.2" width="0.9" height="1.2" fill="#1010d0"/><rect x="2.2" y="4.6" width="1.6" height="1.2" fill="#1010d0"/><rect x="5.2" y="4.6" width="1.6" height="1.2" fill="#9a9a9a"/><rect x="7.8" y="4.6" width="1.6" height="1.2" fill="#9a9a9a"/><rect x="10.2" y="4.6" width="0.9" height="1.2" fill="#9a9a9a"/><rect x="2.2" y="7.0" width="1.6" height="1.2" fill="#1010d0"/><rect x="5.2" y="7.0" width="1.6" height="1.2" fill="#9a9a9a"/><rect x="7.8" y="7.0" width="1.6" height="1.2" fill="#9a9a9a"/><rect x="10.2" y="7.0" width="0.9" height="1.2" fill="#9a9a9a"/><rect x="2.2" y="9.2" width="1.6" height="1.2" fill="#1010d0"/><rect x="5.2" y="9.2" width="1.6" height="1.2" fill="#9a9a9a"/><rect x="7.8" y="9.2" width="1.6" height="1.2" fill="#9a9a9a"/><rect x="10.2" y="9.2" width="0.9" height="1.2" fill="#9a9a9a"/></svg>
<div class="t" style="left:321px;top:572px;font-size:10px;transform-origin:0 0;transform:scaleX(0.892)">Regression Summary for Dependent Variable: Y (Spreadsheet1)</div>
<!-- task buttons -->
<div class="a" style="left:0;top:585px;width:20px;height:26px;border-right:2px solid #8d897a;border-bottom:2px solid #8d897a;border-top:1px solid #fff"></div>
<svg style="left:4px;top:588px" width="15" height="15"><rect x="0.5" y="0.5" width="13" height="13" fill="#fff" stroke="#000" stroke-width="1.2"/><path d="M2 11C3 8 4 3 6 3C8 3 8 10 9.5 10C10.5 10 10.5 8 12 9.5" stroke="#222" stroke-width="1.3" fill="none"/></svg>
<div class="a" style="left:23px;top:586px;width:137px;height:25px;background:#EFEBDF;border-top:1px solid #fff;border-left:1px solid #fff;border-right:2px solid #8d897a;border-bottom:2px solid #8d897a"></div>
<svg style="left:26px;top:591px" width="16" height="15"><path d="M1 0V14H15" fill="none" stroke="#2020f0" stroke-width="1.5"/><path d="M3 12L13 2" stroke="#f03030" stroke-width="1.3"/><path d="M4 6H12M4 9H12" stroke="#ddd" stroke-width="0.6"/></svg>
<div class="t" style="left:43px;top:594px;font-size:10px;font-weight:bold;letter-spacing:0.05px">Multiple Regression ...</div>
<!-- status bar -->
<div class="a" style="left:0;top:611px;width:870px;height:1px;background:#d4d0c0"></div>
<div class="t" style="left:3px;top:615.5px;font-size:10.5px;transform-origin:0 0;transform:scaleX(0.93)">Ready</div>
<div class="sunk" style="left:529px;top:613px;width:51px"></div>
<div class="t" style="left:543px;top:615px;font-size:11px;letter-spacing:-0.3px">C1,V1</div>
<div class="sunk" style="left:582px;top:613px;width:91px"></div>
<div class="sunk" style="left:676px;top:613px;width:40px"></div>
<div class="t dis" style="left:680px;top:615px;font-size:10.5px;transform-origin:0 0;transform:scaleX(0.87)">Sel:OFF</div>
<div class="sunk" style="left:719px;top:613px;width:56px"></div>
<div class="t dis" style="left:722px;top:615px;font-size:10.5px;transform-origin:0 0;transform:scaleX(0.87)">Weight:OFF</div>
<div class="sunk" style="left:778px;top:613px;width:31px"></div>
<div class="t dis" style="left:782px;top:615px;font-size:10.5px;transform-origin:0 0;transform:scaleX(0.87)">CAPS</div>
<div class="sunk" style="left:811px;top:613px;width:29px"></div>
<div class="t" style="left:815.5px;top:615px;font-size:10.5px;transform-origin:0 0;transform:scaleX(0.87)">NUM</div>
<div class="sunk" style="left:843px;top:613px;width:27px"></div>
<div class="t dis" style="left:847px;top:615px;font-size:10.5px;transform-origin:0 0;transform:scaleX(0.87)">REC</div>
<!-- taskbar strip -->
<div class="a" style="left:0;top:627px;width:870px;height:4px;background:linear-gradient(180deg,#9a9a9a 0,#9a9a9a 1px,#6a6a6a 1px,#7a7a7a 4px)"></div>
<div class="a" style="left:188px;top:628px;width:88px;height:3px;background:#5a5a5a;border-top:1px solid #222;border-left:1px solid #222;border-right:1px solid #222"></div>
<div class="a" style="left:277px;top:628px;width:90px;height:3px;background:#5a5a5a;border-top:1px solid #222;border-left:1px solid #222;border-right:1px solid #222"></div>
<div class="a" style="left:368px;top:628px;width:89px;height:3px;background:#5a5a5a;border-top:1px solid #222;border-left:1px solid #222;border-right:1px solid #222"></div>
<div class="a" style="left:458px;top:628px;width:90px;height:3px;background:#5a5a5a;border-top:1px solid #222;border-left:1px solid #222;border-right:1px solid #222"></div>
<div class="a" style="left:549px;top:628px;width:91px;height:3px;background:#2e2e2e;border-top:1px solid #111"></div>
<div class="a" style="left:641px;top:628px;width:89px;height:3px;background:#5a5a5a;border-top:1px solid #222;border-left:1px solid #222;border-right:1px solid #222"></div>
<div class="a" style="left:12px;top:627px;width:22px;height:10px;border-radius:11px 11px 0 0;background:radial-gradient(circle at 50% 60%,#9ed8f8,#2c7cc0);border:1px solid #123"></div>

</body></html>
